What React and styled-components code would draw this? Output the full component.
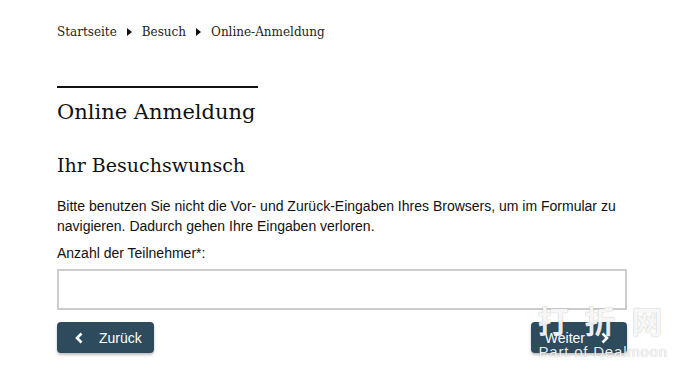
import React from "react";
import styled, { createGlobalStyle } from "styled-components";

const GlobalStyle = createGlobalStyle`
  body {
    margin: 0;
    background: #ffffff;
    color: #111111;
  }
`;

const Page = styled.div`
  position: relative;
  width: 680px;
  height: 370px;
  overflow: hidden;
  padding: 0 53px 0 57px;
  box-sizing: border-box;
`;

const Breadcrumb = styled.nav`
  display: flex;
  align-items: center;
  gap: 9px;
  padding-top: 24px;
  font-family: "DejaVu Serif", Georgia, serif;
  font-size: 12px;
  line-height: 16px;
  color: #222;
`;

const Crumb = styled.span`
  white-space: nowrap;
`;

const Arrow = styled.span`
  width: 0;
  height: 0;
  margin: 0 1px;
  border-top: 4px solid transparent;
  border-bottom: 4px solid transparent;
  border-left: 5px solid #111;
`;

const Rule = styled.div`
  width: 201px;
  height: 2px;
  background: #111;
  margin-top: 46px;
`;

const Title = styled.h1`
  margin: 10px 0 0;
  font-family: "DejaVu Serif", Georgia, serif;
  font-weight: normal;
  font-size: 21px;
  line-height: 28px;
  color: #111;
`;

const SubTitle = styled.h2`
  margin: 26px 0 0;
  font-family: "DejaVu Serif", Georgia, serif;
  font-weight: normal;
  font-size: 19px;
  line-height: 26px;
  color: #111;
`;

const Text = styled.p`
  margin: 18px 0 0;
  font-family: "Liberation Sans", Arial, sans-serif;
  font-size: 14px;
  line-height: 20px;
  color: #111;
`;

const Label = styled.label`
  display: block;
  margin-top: 8px;
  font-family: "Liberation Sans", Arial, sans-serif;
  font-size: 14px;
  line-height: 18px;
  color: #111;
`;

const Input = styled.input`
  display: block;
  box-sizing: border-box;
  width: 100%;
  height: 41px;
  margin-top: 7px;
  border: 2px solid #cccccc;
  background: #fff;
  outline: none;
`;

const Actions = styled.div`
  display: flex;
  justify-content: space-between;
  margin-top: 12px;
`;

const NavButton = styled.button`
  display: flex;
  align-items: center;
  gap: 16px;
  height: 31px;
  padding: ${(p) => (p.$next ? "0 18px 0 14px" : "0 12px 0 18px")};
  border: none;
  border-radius: 4px;
  background: #2e4b5d;
  color: #fff;
  font-family: "Liberation Sans", Arial, sans-serif;
  font-size: 14px;
  box-shadow: 0 2px 3px rgba(0, 0, 0, 0.25);
  cursor: pointer;
`;

const Watermark = styled.div`
  position: absolute;
  right: 12px;
  bottom: 9px;
  display: flex;
  flex-direction: column;
  align-items: flex-start;
  color: rgba(255, 255, 255, 0.92);
  text-shadow: 0 0 1px rgba(0, 0, 0, 0.35);
  pointer-events: none;
`;

const WatermarkCn = styled.span`
  font-family: "Noto Sans CJK SC", sans-serif;
  font-size: 31px;
  font-weight: 700;
  letter-spacing: 16px;
  margin-right: -16px;
  line-height: 34px;
`;

const WatermarkEn = styled.span`
  font-family: "Liberation Sans", Arial, sans-serif;
  font-size: 15px;
  letter-spacing: 0.8px;
  line-height: 18px;
  margin-top: 6px;
  margin-left: 1px;
`;

const Chevron = ({ dir }) => (
  <svg width="8" height="12" viewBox="0 0 8 12">
    <path
      d={dir === "left" ? "M6.5 1.5 L2 6 L6.5 10.5" : "M1.5 1.5 L6 6 L1.5 10.5"}
      fill="none"
      stroke="#fff"
      strokeWidth="2.6"
    />
  </svg>
);

export default function App() {
  return (
    <Page>
      <GlobalStyle />
      <Breadcrumb>
        <Crumb>Startseite</Crumb>
        <Arrow />
        <Crumb>Besuch</Crumb>
        <Arrow />
        <Crumb>Online-Anmeldung</Crumb>
      </Breadcrumb>

      <Rule />
      <Title>Online Anmeldung</Title>
      <SubTitle>Ihr Besuchswunsch</SubTitle>

      <Text>
        Bitte benutzen Sie nicht die Vor- und Zurück-Eingaben Ihres Browsers, um im Formular zu
        navigieren. Dadurch gehen Ihre Eingaben verloren.
      </Text>

      <Label htmlFor="teilnehmer">Anzahl der Teilnehmer*:</Label>
      <Input id="teilnehmer" type="text" />

      <Actions>
        <NavButton>
          <Chevron dir="left" />
          Zurück
        </NavButton>
        <NavButton $next>
          Weiter
          <Chevron dir="right" />
        </NavButton>
      </Actions>

      <Watermark>
        <WatermarkCn>打折网</WatermarkCn>
        <WatermarkEn>Part of Dealmoon</WatermarkEn>
      </Watermark>
    </Page>
  );
}
